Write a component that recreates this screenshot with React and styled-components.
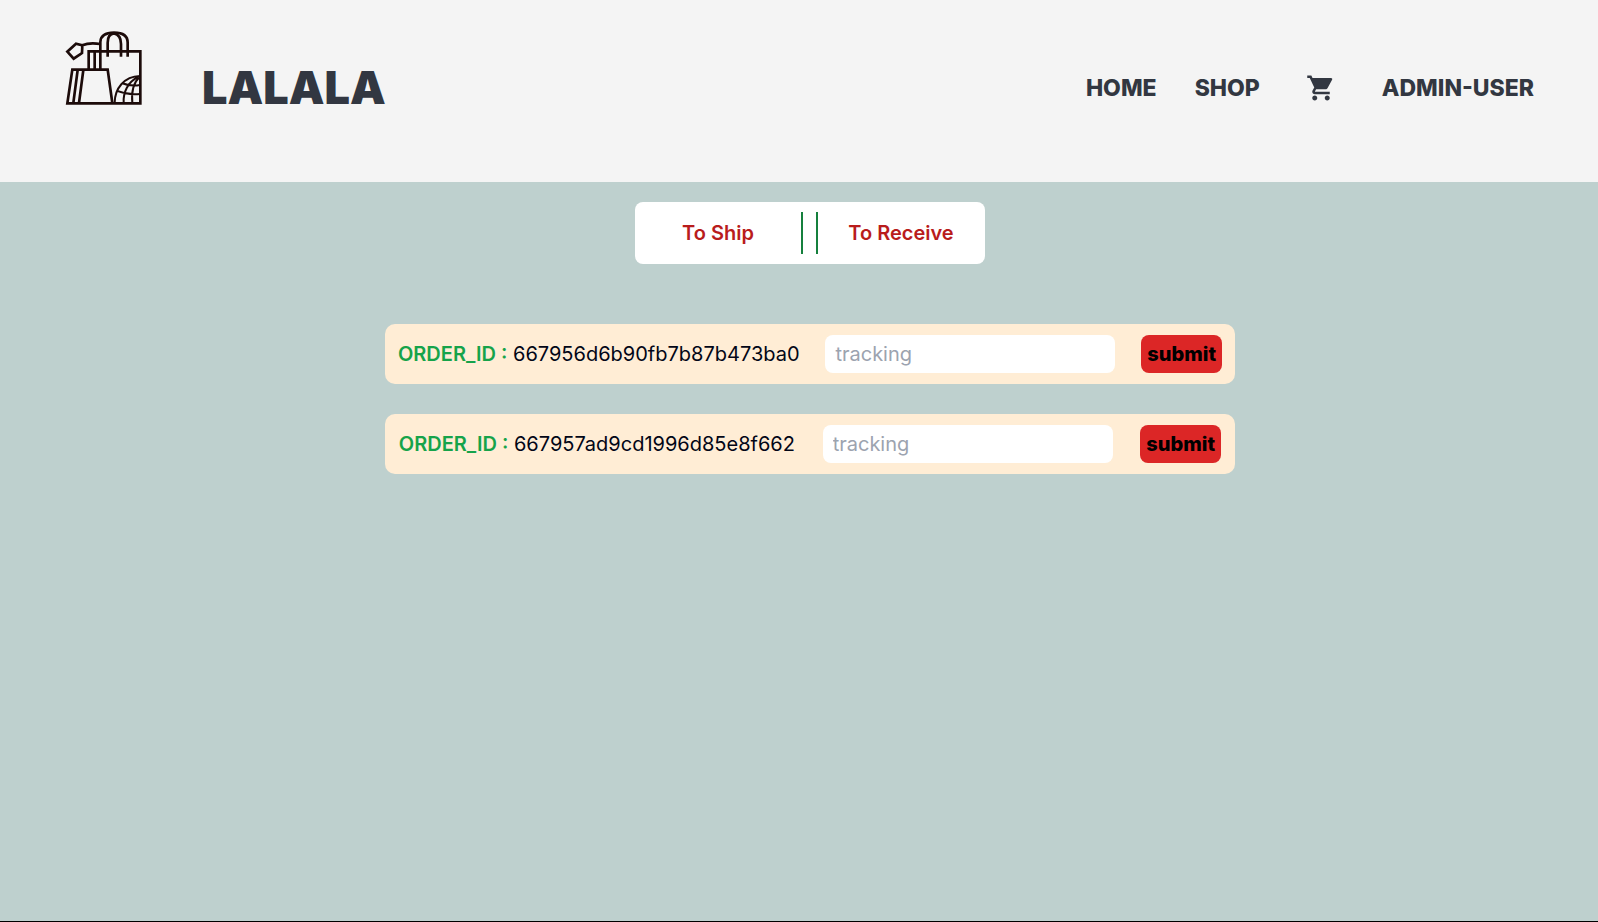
import React from "react";
import styled, { createGlobalStyle } from "styled-components";
import { MdShoppingCart } from "react-icons/md";

const GlobalStyle = createGlobalStyle`
  *, *::before, *::after { box-sizing: border-box; }
  body {
    margin: 0;
    font-family: Inter, "Liberation Sans", sans-serif;
    background: #bed0ce;
    color: #020617;
  }
  button, input { font: inherit; border: 0; margin: 0; }
`;

const Page = styled.div`
  min-height: 100vh;
  display: flex;
  flex-direction: column;
  border-bottom: 1px solid #000;
`;

const Header = styled.header`
  display: flex;
  align-items: center;
  justify-content: space-between;
  height: 182px;
  padding: 0 64px 6px 50px;
  background: #f4f4f4;
  color: #323741;
`;

const Brand = styled.a`
  display: flex;
  align-items: center;
  gap: 42px;
  color: inherit;
  text-decoration: none;
`;

const Logo = styled.svg`
  width: 110px;
  height: 136px;
`;

const BrandName = styled.span`
  font-size: 45px;
  line-height: 60px;
  font-weight: 900;
`;

const Nav = styled.nav`
  display: flex;
  align-items: center;
  gap: 38px;
`;

const NavLink = styled.a`
  display: flex;
  padding: ${(p) => (p.$icon ? "0 8px" : "0")};
  color: inherit;
  font-size: 23px;
  line-height: 32px;
  font-weight: 800;
  text-decoration: none;
`;

const Main = styled.main`
  display: flex;
  flex-direction: column;
  align-items: center;
  gap: 60px;
  padding: 20px 0 20px 22px;
`;

const Tabs = styled.div`
  display: flex;
  gap: 13px;
  width: 350px;
  max-width: 100%;
  padding: 10px 1px 10px 0;
  border-radius: 8px;
  background: #fff;
`;

const Tab = styled.button`
  flex: 1;
  height: 42px;
  padding: 0;
  background: none;
  border-${(p) => p.$divider}: 2px solid #15803d;
  color: #b91c1c;
  font-size: 20px;
  font-weight: 600;
  cursor: pointer;
`;

const Orders = styled.ul`
  display: flex;
  flex-direction: column;
  gap: 30px;
  width: 850px;
  max-width: 100%;
  margin: 0;
  padding: 0;
  list-style: none;
`;

const OrderRow = styled.li`
  display: flex;
  align-items: center;
  justify-content: space-around;
  height: 60px;
  border-radius: 10px;
  background: #ffedd5;
  font-size: 20px;
  line-height: 28px;
`;

const Key = styled.span`
  color: #16a34a;
  font-weight: 600;
`;

const Tracking = styled.input`
  width: 290px;
  height: 38px;
  padding: 0 10px;
  border-radius: 8px;
  background: #fff;
  &::placeholder { color: #9ca3af; opacity: 1; }
`;

const Submit = styled.button`
  height: 38px;
  padding: 0 6px;
  border-radius: 8px;
  background: #dc2626;
  color: #000;
  font-weight: 800;
  cursor: pointer;
`;

const orders = ["667956d6b90fb7b87b473ba0", "667957ad9cd1996d85e8f662"];

function ShoppingLogo() {
  return (
    <Logo viewBox="0 0 330 408" fill="none" stroke="#1c0b0a" strokeWidth="8" aria-hidden="true">
      <path d="M116 146V94H271V250H52L67 149H173L187 249" />
      <path d="M83 150L70 249M100 150L87 249M134 95V148M151 148V66C152 48 165 38 192 38C219 38 233 48 233 68V110" />
      <path d="M173 110V68C173 50 181 41 192 40C206 43 213 55 213 72V110" />
      <path d="M151 72C133 69 115 68 97 76L78 71L52 95L71 116L96 99L97 76" />
      <path strokeWidth="6" d="M194 249C194 206 222 169 270 168M221 249C219 218 232 186 267 169M247 249C244 218 249 189 269 170M199 212Q234 226 270 222M215 189Q240 200 270 195" />
    </Logo>
  );
}

export default function App() {
  return (
    <Page>
      <GlobalStyle />
      <Header>
        <Brand href="#">
          <ShoppingLogo />
          <BrandName>LALALA</BrandName>
        </Brand>
        <Nav>
          <NavLink href="#">HOME</NavLink>
          <NavLink href="#">SHOP</NavLink>
          <NavLink href="#" $icon aria-label="Cart">
            <MdShoppingCart size={30} />
          </NavLink>
          <NavLink href="#">ADMIN-USER</NavLink>
        </Nav>
      </Header>
      <Main>
        <Tabs>
          <Tab $divider="right">To Ship</Tab>
          <Tab $divider="left">To Receive</Tab>
        </Tabs>
        <Orders>
          {orders.map((id) => (
            <OrderRow key={id}>
              <label htmlFor={id}>
                <Key>ORDER_ID :</Key> {id}
              </label>
              <Tracking id={id} type="text" placeholder="tracking" />
              <Submit type="submit">submit</Submit>
            </OrderRow>
          ))}
        </Orders>
      </Main>
    </Page>
  );
}
